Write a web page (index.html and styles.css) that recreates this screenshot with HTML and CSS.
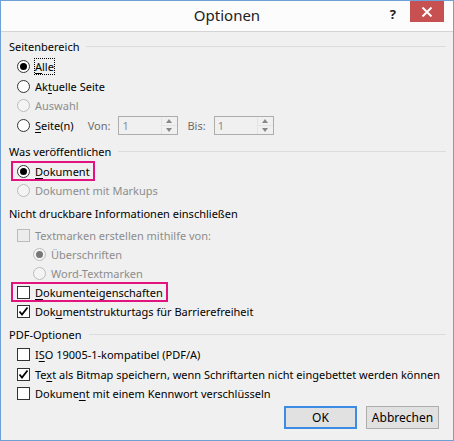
FILE: index.html
```html
<!DOCTYPE html>
<html lang="de">
<head>
<meta charset="utf-8">
<link rel="stylesheet" href="styles.css">
</head>
<body>
<div class="window">
  <div class="titlebar">
    <div class="title">Optionen</div>
    <div class="help">?</div>
    <div class="close"><svg width="12" height="10" viewBox="0 0 12 10"><path d="M1.5 0.5 L10.5 9.5 M10.5 0.5 L1.5 9.5" stroke="#fff" stroke-width="2"/></svg></div>
  </div>
  <div class="content">
    <div class="heading"><span>Seitenbereich</span><i></i></div>
    <div class="row h20 mt2"><span class="radio on"></span><span class="focus"><u>A</u>lle</span></div>
    <div class="row h20"><span class="radio"></span><span>Ak<u>t</u>uelle Seite</span></div>
    <div class="row h18 dis"><span class="radio"></span><span>Auswahl</span></div>
    <div class="row h22 pages">
      <span class="radio"></span><span class="lbl"><u>S</u>eite(n)</span>
      <span class="from">Von:</span>
      <span class="spin"><span class="val">1</span><span class="arrows"><b class="up"></b><b class="down"></b></span></span>
      <span class="to">Bis:</span>
      <span class="spin"><span class="val">1</span><span class="arrows"><b class="up"></b><b class="down"></b></span></span>
    </div>

    <div class="heading mt7"><span>Was veröffentlichen</span><i></i></div>
    <div class="row h20 mt2"><span class="mark"><span class="radio on"></span><span><u>D</u>okument</span></span></div>
    <div class="row h19 dis"><span class="radio"></span><span>Dokument mit Markups</span></div>

    <div class="heading mt5"><span>Nicht druckbare Informationen einschließen</span></div>
    <div class="row h20 mt4 dis"><span class="check"></span><span>Textmarken erstellen mithilfe von:</span></div>
    <div class="row h19 dis sub"><span class="radio on"></span><span>Überschriften</span></div>
    <div class="row h18 dis sub"><span class="radio"></span><span>Word-Textmarken</span></div>
    <div class="row h20"><span class="mark"><span class="check"></span><span><u>D</u>okumenteigenschaften</span></span></div>
    <div class="row h19"><span class="check"><svg width="11" height="11" viewBox="0 0 11 11"><path d="M1.5 5.5 L4 8.5 L9.5 1.5" fill="none" stroke="#000" stroke-width="1.8"/></svg></span><span>Dok<u>u</u>mentstrukturtags für Barrierefreiheit</span></div>

    <div class="heading mt5"><span>PDF-Optionen</span><i></i></div>
    <div class="row h20 mt2"><span class="check"></span><span>I<u>S</u>O 19005-1-kompatibel (PDF/A)</span></div>
    <div class="row h20"><span class="check"><svg width="11" height="11" viewBox="0 0 11 11"><path d="M1.5 5.5 L4 8.5 L9.5 1.5" fill="none" stroke="#000" stroke-width="1.8"/></svg></span><span>Te<u>x</u>t als Bitmap speichern, wenn Schriftarten nicht eingebettet werden können</span></div>
    <div class="row h19"><span class="check"></span><span>Dokume<u>n</u>t mit einem Kennwort verschlüsseln</span></div>

    <div class="buttons">
      <button class="btn default">OK</button>
      <button class="btn">Abbrechen</button>
    </div>
  </div>
</div>
</body>
</html>
```
FILE: styles.css
```css
html, body { margin: 0; padding: 0; background: #6d6d6d; }
body { width: 454px; height: 441px; overflow: hidden; }
.window {
  width: 452px; height: 439px;
  border: 1px solid #6fa0d8;
  background: #f0f0f0;
  display: flex; flex-direction: column;
  font-family: "Noto Sans", "Open Sans", sans-serif;
  font-size: 11px;
  color: #000;
}
.titlebar {
  height: 30px;
  background: #fcfcfc;
  border-bottom: 1px solid #d4d4d4;
  display: flex; align-items: flex-start;
  position: relative;
  flex: none;
}
.title {
  position: absolute; left: 0; right: 0; top: 4px;
  text-align: center; font-size: 15px; color: #222;
}
.help {
  margin-left: auto; margin-top: 4px; margin-right: 14px;
  font-size: 13px; font-weight: bold; color: #222;
}
.close {
  width: 34px; height: 21px; margin-right: 9px;
  background: #c75050;
  display: flex; align-items: center; justify-content: center;
}
.content { padding: 6px 7px 0 7px; display: flex; flex-direction: column; flex: 1; }
.heading { display: flex; align-items: center; height: 16px; margin-left: 1px; flex: none; }
.heading i { flex: 1; height: 1px; background: #dcdcdc; margin-left: 7px; }
.mt2 { margin-top: 2px; }
.mt4 { margin-top: 4px; }
.mt5 { margin-top: 5px; }
.mt7 { margin-top: 7px; }
.row { display: flex; align-items: center; margin-left: 9px; flex: none; }
.h18 { height: 18px; }
.h19 { height: 19px; }
.h20 { height: 20px; }
.h22 { height: 22px; }
.row.sub { margin-left: 25px; }
.row.dis { color: #8d8d8d; }
.radio {
  width: 11px; height: 11px; border: 1px solid #333; border-radius: 50%;
  background: #fff; margin-right: 5px; position: relative; flex: none;
}
.radio.on::after {
  content: ""; position: absolute; left: 2px; top: 2px; width: 7px; height: 7px;
  border-radius: 50%; background: #000;
}
.dis .radio { border-color: #bcbcbc; background: #f4f4f4; }
.dis .radio.on::after { background: #777; }
.check {
  width: 11px; height: 11px; border: 1px solid #333; background: #fff;
  margin-right: 5px; flex: none; display: flex; align-items: center; justify-content: center;
}
.dis .check { border-color: #bcbcbc; background: #ececec; }
.focus { outline: 1px dotted #000; outline-offset: 0; }
u { text-decoration-thickness: 1px; text-underline-offset: 2px; }
.mark {
  display: inline-flex; align-items: center; height: 16px;
  border: 2px solid #e2127f; padding: 0 3px 0 4px; margin-left: -6px;
}
.pages .lbl { margin-right: 14px; }
.pages .from, .pages .to { color: #6d6d6d; margin-right: 8px; }
.pages .to { margin-left: 9px; }
.spin {
  display: flex; width: 58px; height: 17px; border: 1px solid #adadad; background: #f0f0f0;
}
.spin .val { flex: 1; color: #8d8d8d; padding-left: 3px; line-height: 17px; }
.arrows { width: 15px; display: flex; flex-direction: column; border-left: 1px solid #e4e4e4; }
.arrows b { flex: 1; position: relative; }
.arrows .up { border-bottom: 1px solid #e4e4e4; }
.arrows .up::after, .arrows .down::after {
  content: ""; position: absolute; left: 4px; top: 2px;
  border-left: 3px solid transparent; border-right: 3px solid transparent;
}
.arrows .up::after { border-bottom: 4px solid #888; }
.arrows .down::after { border-top: 4px solid #888; }
.buttons { display: flex; justify-content: flex-end; gap: 9px; margin-top: 3px; margin-right: 7px; }
.btn {
  width: 73px; height: 23px; font: inherit; font-size: 12px; color: #000;
  background: #e1e1e1; border: 1px solid #adadad; padding: 0;
}
.btn.default { border-color: #3c8ce6; border-width: 2px; }
```
